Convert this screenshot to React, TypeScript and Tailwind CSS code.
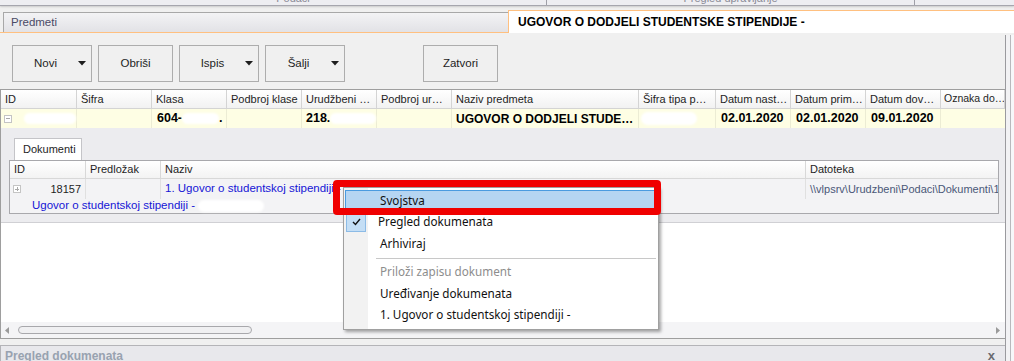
import React from 'react';

const GRID_FONT = { fontFamily: '"Liberation Sans", Arial, sans-serif' };
const MENU_FONT = { fontFamily: '"Noto Sans", "Open Sans", sans-serif' };

const mainCols = [
  { label: 'ID', w: 76 },
  { label: 'Šifra', w: 75 },
  { label: 'Klasa', w: 75 },
  { label: 'Podbroj klase', w: 75 },
  { label: 'Urudžbeni …', w: 75 },
  { label: 'Podbroj ur…', w: 75 },
  { label: 'Naziv predmeta', w: 187 },
  { label: 'Šifra tipa p…', w: 77 },
  { label: 'Datum nast…', w: 75 },
  { label: 'Datum prim…', w: 75 },
  { label: 'Datum dov…', w: 75 },
  { label: 'Oznaka do…', w: 64 },
];

function Blob({ w, h = 11 }: { w: number; h?: number }) {
  return (
    <span
      className="inline-block rounded-full bg-white blur-[1px] align-middle"
      style={{ width: w, height: h }}
    />
  );
}

function TreeBox({ minus }: { minus?: boolean }) {
  return (
    <span className="relative inline-block h-[8px] w-[8px] border border-[#c4c4c4] bg-white">
      <span className="absolute left-[1px] top-[2.5px] h-px w-[4px] bg-[#a8a8a8]" />
      {!minus && <span className="absolute left-[2.5px] top-[1px] h-[4px] w-px bg-[#a8a8a8]" />}
    </span>
  );
}

function ToolButton({ label, arrow, w }: { label: string; arrow?: boolean; w: number }) {
  return (
    <div
      className="flex h-[37px] items-center border border-[#adadad] bg-[#f0f0f0] text-[11.5px] text-[#1e1e1e]"
      style={{ width: w }}
    >
      <span className="flex-1 text-center">{label}</span>
      {arrow && (
        <svg width="8" height="5" viewBox="0 0 8 5" className="mr-[5px]">
          <path d="M0 0h8L4 4.5z" fill="#1e1e1e" />
        </svg>
      )}
    </div>
  );
}

function MenuItem({ children, disabled }: { children: React.ReactNode; disabled?: boolean }) {
  return (
    <div className="flex h-[22px] items-center">
      <div className="h-full w-[25px] shrink-0" />
      <div className={`pl-[11px] text-[11.7px] ${disabled ? 'text-[#8d8d8d]' : 'text-[#111]'}`}>{children}</div>
    </div>
  );
}

export default function App() {
  return (
    <div className="relative h-[361px] w-[1014px] overflow-hidden bg-[#f0f0f0]" style={GRID_FONT}>
      {/* top cut-off strip */}
      <div className="flex h-[6px] border-b border-[#a6a6ae] bg-[#eeeef2] shadow-[0_1px_2px_rgba(0,0,0,0.15)]">
        <div className="flex w-[547px] justify-center overflow-hidden border-r border-[#a0a0a8]">
          <div className="-mt-[8px] pl-[40px] text-[11px] leading-[13px] text-[#8a8a96]">Podaci</div>
        </div>
        <div className="flex w-[368px] justify-center overflow-hidden border-r border-[#a0a0a8]">
          <div className="-mt-[8px] text-[11px] leading-[13px] text-[#8a8a96]">Pregled upravljanje</div>
        </div>
        <div className="flex-1" />
      </div>

      {/* tab strip */}
      <div className="mt-[4px] flex h-[23px]">
        <div className="flex w-[508px] flex-col">
          <div className="ml-[3px] mt-[2px] flex flex-1 items-center border-l border-t border-[#a8a8a8] bg-gradient-to-b from-[#f3f3f5] to-[#e2e2e6] pl-[7px] text-[11.5px] text-[#4a4a66]">
            Predmeti
          </div>
          <div className="h-px bg-[#ffc080]" />
        </div>
        <div className="flex flex-1 items-center border-l border-t border-[#ffc080] bg-white pl-[9px] text-[12px] font-bold text-black">
          UGOVOR O DODJELI STUDENTSKE STIPENDIJE -
        </div>
      </div>

      <div className="flex h-[328px]">
        <div className="flex w-[1005px] flex-col">
          {/* toolbar */}
          <div className="flex h-[56px] items-start gap-[6px] pl-[12px] pt-[12px]">
            <ToolButton label="Novi" arrow w={80} />
            <ToolButton label="Obriši" w={75} />
            <ToolButton label="Ispis" arrow w={80} />
            <ToolButton label="Šalji" arrow w={80} />
            <div className="ml-[72px]">
              <ToolButton label="Zatvori" w={75} />
            </div>
          </div>

          {/* main grid */}
          <div className="flex flex-1 flex-col border-l border-t border-[#9e9e9e]">
            <div className="flex h-[19px] border-b border-[#d4d4d4] bg-gradient-to-b from-white to-[#f2f2f2]">
              {mainCols.map((c, i) => (
                <div
                  key={c.label}
                  className={`flex items-center overflow-hidden whitespace-nowrap border-r border-[#d4d4d4] text-[#1e1e1e] ${
                    i === mainCols.length - 1 ? 'pl-[3px] text-[10.5px]' : 'pl-[4px] text-[11px]'
                  }`}
                  style={{ width: c.w }}
                >
                  {c.label}
                </div>
              ))}
            </div>
            <div className="flex h-[19px] bg-[#fefee4] text-[12.5px] font-bold text-black">
              <div className="flex w-[76px] items-center gap-[12px] border-r border-[#ececd4] pl-[3px]">
                <TreeBox minus />
                <Blob w={52} />
              </div>
              <div className="w-[75px] border-r border-[#ececd4]" />
              <div className="flex w-[75px] items-center border-r border-[#ececd4] pl-[5px]">
                604-<Blob w={37} />.
              </div>
              <div className="w-[75px] border-r border-[#ececd4]" />
              <div className="flex w-[75px] items-center border-r border-[#ececd4] pl-[4px]">
                218.<Blob w={60} />
              </div>
              <div className="w-[75px] border-r border-[#ececd4]" />
              <div className="flex w-[187px] items-center whitespace-nowrap border-r border-[#ececd4] pl-[4px] text-[12px]">
                UGOVOR O DODJELI STUDE…
              </div>
              <div className="flex w-[77px] items-center border-r border-[#ececd4] pl-[2px]">
                <Blob w={56} h={13} />
              </div>
              <div className="flex w-[75px] items-center border-r border-[#ececd4] pl-[5px]">02.01.2020</div>
              <div className="flex w-[75px] items-center border-r border-[#ececd4] pl-[5px]">02.01.2020</div>
              <div className="flex w-[75px] items-center border-r border-[#ececd4] pl-[5px]">09.01.2020</div>
              <div className="w-[64px]" />
            </div>

            {/* detail area */}
            <div className="flex h-[95px] flex-col border-b border-[#d0d0d4] bg-[#ececef] pl-[8px] pr-[6px] pt-[10px]">
              <div className="ml-[5px] flex h-[22px] w-[68px] items-center border-l border-r border-t border-[#c4c4c8] bg-white pl-[8px] text-[11px] text-[#1e1e1e]">
                Dokumenti
              </div>
              <div className="flex h-[54px] w-[990px] flex-col border border-[#a8a8ac] bg-[#f3f3f5]">
                <div className="flex h-[18px] border-b border-[#d8d8d8] bg-gradient-to-b from-white to-[#f3f3f3] text-[11px] text-[#1e1e1e]">
                  <div className="flex w-[76px] items-center border-r border-[#d8d8d8] pl-[4px]">ID</div>
                  <div className="flex w-[75px] items-center border-r border-[#d8d8d8] pl-[4px]">Predložak</div>
                  <div className="flex w-[645px] items-center border-r border-[#d8d8d8] pl-[4px]">Naziv</div>
                  <div className="flex flex-1 items-center pl-[4px]">Datoteka</div>
                </div>
                <div className="flex h-[20px] text-[11px]">
                  <div className="flex w-[76px] items-center justify-between border-r border-[#e0e0e0] pl-[3px] pr-[4px] text-[#1e1e1e]">
                    <TreeBox />
                    <span>18157</span>
                  </div>
                  <div className="w-[75px] border-r border-[#e0e0e0]" />
                  <div className="flex w-[645px] items-center whitespace-nowrap border-r border-[#e0e0e0] pl-[4px] text-[11.5px] text-[#1515d6]">
                    1. Ugovor o studentskoj stipendiji - r
                  </div>
                  <div className="flex flex-1 items-center overflow-hidden whitespace-nowrap pl-[4px] text-[#4a5878]">
                    \\vlpsrv\Urudzbeni\Podaci\Dokumenti\18157
                  </div>
                </div>
                <div className="flex h-[14px] items-center whitespace-nowrap pl-[22px] text-[11.5px] text-[#1515d6]">
                  Ugovor o studentskoj stipendiji -&nbsp;<Blob w={66} h={12} />
                </div>
              </div>
            </div>

            <div className="flex-1 bg-white" />

            {/* horizontal scrollbar */}
            <div className="flex h-[17px] items-center border-b border-[#9e9e9e] bg-[#f4f4f6] pl-[4px] pr-[5px]">
              <svg width="4" height="7" viewBox="0 0 4 7">
                <path d="M4 0v7L0 3.5z" fill="#9a9a9a" />
              </svg>
              <div className="ml-[9px] h-[8px] w-[234px] rounded-full border border-[#a8a8ac] bg-[#f0f0f2]" />
              <div className="flex-1" />
              <svg width="4" height="7" viewBox="0 0 4 7">
                <path d="M0 0v7L4 3.5z" fill="#9a9a9a" />
              </svg>
            </div>
          </div>

          {/* bottom panel */}
          <div className="mt-[6px] flex h-[16px] items-end border-l border-t border-[#b4b4b8] bg-[#e8e8ec] pl-[4px] pr-[10px]">
            <span className="-mb-[4px] text-[12px] font-bold text-[#98a2b0]">Pregled dokumenata</span>
            <span className="ml-auto -mb-[4px] text-[13px] font-bold text-[#6a6a70]">x</span>
          </div>
        </div>

        {/* vertical strip */}
        <div className="mt-[2px] flex w-[9px] border-l border-[#9a9a9e]">
          <div className="w-[4px] bg-[#f2f2f4]" />
          <div className="w-px bg-[#b8b8bc]" />
          <div className="flex-1 bg-[#f7f7f9]" />
        </div>
      </div>

      {/* context menu */}
      <div
        className="absolute left-[343px] top-[187px] w-[316px] border border-[#a0a0a0] bg-white py-[2px] shadow-[2px_2px_3px_rgba(0,0,0,0.35)]"
        style={MENU_FONT}
      >
        <div className="absolute bottom-0 left-0 top-0 w-[25px] border-r border-white bg-[#f2f2f2]" />
        <div className="relative">
          <div className="relative mx-px flex h-[21px] items-center border border-[#4a9be0] bg-[#b5d5f2]">
            <div className="pl-[34px] text-[11.7px] text-[#111]">Svojstva</div>
          </div>
          <div className="relative flex h-[22px] items-center">
            <div className="ml-[2px] flex h-[20px] w-[20px] items-center justify-center border border-[#8cbbe6] bg-[#c4def5]">
              <svg width="9" height="8" viewBox="0 0 9 8">
                <path d="M1 4l2.5 2.5L8 1" stroke="#111" strokeWidth="1.4" fill="none" />
              </svg>
            </div>
            <div className="pl-[12px] text-[11.7px] text-[#111]">Pregled dokumenata</div>
          </div>
          <MenuItem>Arhiviraj</MenuItem>
          <div className="flex h-[6px] items-center pl-[32px] pr-[2px]">
            <div className="h-px flex-1 bg-[#c8c8c8]" />
          </div>
          <MenuItem disabled>Priloži zapisu dokument</MenuItem>
          <MenuItem>Uređivanje dokumenata</MenuItem>
          <MenuItem>
            1. Ugovor o studentskoj stipendiji -&nbsp;<Blob w={68} h={22} />
          </MenuItem>
        </div>
      </div>

      {/* red highlight */}
      <div className="absolute left-[333px] top-[180px] h-[35px] w-[328px] rounded-[4px] border-[7px] border-[#f00000]" />
    </div>
  );
}
